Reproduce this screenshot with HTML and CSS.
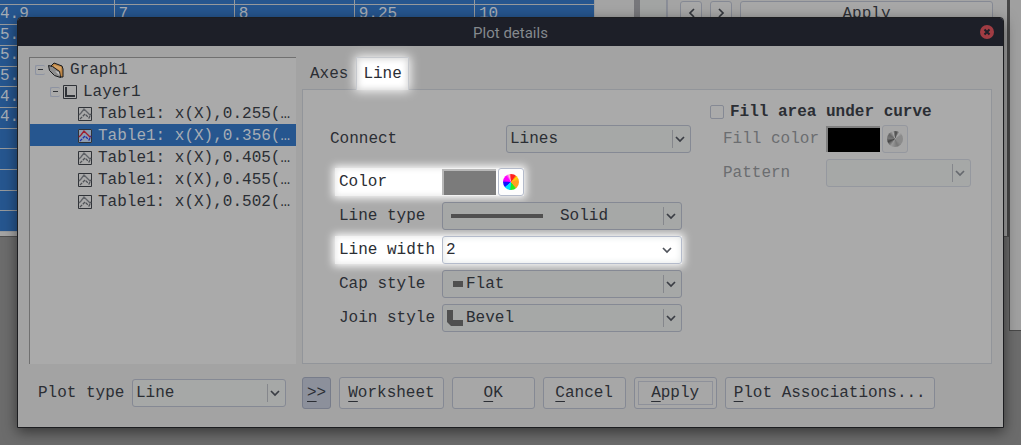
FILE: index.html
```
<!DOCTYPE html>
<html lang="en">
<head>
<meta charset="utf-8">
<title>Plot details</title>
<link rel="stylesheet" href="styles.css">
</head>
<body>
<svg class="defs" aria-hidden="true">
  <symbol id="chevron" viewBox="0 0 10 7"><path d="M1 1l4 4 4-4" fill="none" stroke="currentColor" stroke-width="1.700"/></symbol>
  <symbol id="curve" viewBox="0 0 14 14"><path d="M.5.5h13v13H.5z" fill="none" stroke="#303338"/><path class="c1" d="M1 8l2-2 3-4 4 4 2 2 1-1" fill="none" stroke-width="1.300"/><path class="c2" d="M2 12l5-5 4 4 2-4" fill="none" stroke-width="1.300" stroke-dasharray="3 1"/></symbol>
</svg>

<div class="desktop" aria-hidden="true">
  <div class="app">
    <table class="cells">
      <tr><td></td><td></td><td></td><td></td><td></td></tr>
      <tr><td>4.9</td><td>7</td><td>8</td><td>9.25</td><td>10</td></tr>
      <tr><td>5.</td><td></td><td></td><td></td><td></td></tr>
      <tr><td>5.</td><td></td><td></td><td></td><td></td></tr>
      <tr><td>5.</td><td></td><td></td><td></td><td></td></tr>
      <tr><td>4.</td><td></td><td></td><td></td><td></td></tr>
      <tr><td>4.</td><td></td><td></td><td></td><td></td></tr>
      <tr><td></td><td></td><td></td><td></td><td></td></tr>
      <tr><td></td><td></td><td></td><td></td><td></td></tr>
      <tr><td></td><td></td><td></td><td></td><td></td></tr>
      <tr><td></td><td></td><td></td><td></td><td></td></tr>
      <tr><td></td><td></td><td></td><td></td><td></td></tr>
    </table>
    <div class="scroll"></div>
    <div class="tools">
      <button class="btn step" tabindex="-1" aria-label="Previous"><svg viewBox="0 0 7 10"><path d="M6 1L2 5l4 4" fill="none" stroke="#33363c" stroke-width="1.700"/></svg></button>
      <button class="btn step" tabindex="-1" aria-label="Next"><svg viewBox="0 0 7 10"><path d="M1 1l4 4-4 4" fill="none" stroke="#33363c" stroke-width="1.700"/></svg></button>
      <button class="btn wide" tabindex="-1">Apply</button>
    </div>
  </div>
  <div class="side"></div>
</div>

<main class="dialog" role="dialog" aria-labelledby="title">
  <header class="titlebar">
    <h1 id="title">Plot details</h1>
    <button class="close" aria-label="Close"><svg viewBox="0 0 14 14"><circle cx="7" cy="7" r="7" fill="#a03c43"/><path d="M4.500 4.500l5 5m0-5l-5 5" stroke="#1d1f28" stroke-width="2"/></svg></button>
  </header>

  <div class="content">
    <ul class="tree">
      <li class="node graph"><button class="toggle" aria-label="Collapse Graph1"></button>
        <svg class="folder" viewBox="0 0 16 16"><path d="M3 4l3-3 8 3 1 3v8h-3z" fill="#bd8646" stroke="#17181b"/><path d="M6 3l7 2v4L6 5z" fill="#d4a265"/><path d="M.5 3.500l4 1 7 5 1 6-6-2-5-5z" fill="#8c8c8c" stroke="#17181b"/><path d="M7 9l4 1 1 4z" fill="#c0c0c0"/></svg>
        <span>Graph1</span></li>
      <li class="node layer"><button class="toggle" aria-label="Collapse Layer1"></button>
        <svg class="icon" viewBox="0 0 14 14"><path d="M.5.5h13v13H.5z" fill="none" stroke="#303338"/><path d="M3 2v9h9" fill="none" stroke="#303338" stroke-width="2"/></svg>
        <span>Layer1</span></li>
      <li class="node leaf"><svg class="icon"><use href="#curve"/></svg><span>Table1: x(X),0.255(…</span></li>
      <li class="node leaf selected"><svg class="icon"><use href="#curve"/></svg><span>Table1: x(X),0.356(…</span></li>
      <li class="node leaf"><svg class="icon"><use href="#curve"/></svg><span>Table1: x(X),0.405(…</span></li>
      <li class="node leaf"><svg class="icon"><use href="#curve"/></svg><span>Table1: x(X),0.455(…</span></li>
      <li class="node leaf"><svg class="icon"><use href="#curve"/></svg><span>Table1: x(X),0.502(…</span></li>
    </ul>

    <section class="pages">
      <div class="tabs" role="tablist">
        <button class="tab" role="tab" aria-selected="false">Axes</button>
        <button class="tab active" role="tab" aria-selected="true">Line</button>
      </div>
      <div class="panel" role="tabpanel">
        <div class="stroke">
          <div class="row connect"><label for="connect">Connect</label>
            <div class="combo"><select id="connect"><option>Lines</option></select><svg class="arrow"><use href="#chevron"/></svg></div></div>
          <div class="group">
            <div class="row color lit"><label for="color">Color</label>
              <button class="swatch" id="color" aria-label="Color"></button>
              <button class="btn pick" aria-label="Choose color"><span class="wheel"></span></button></div>
            <div class="row"><label for="type">Line type</label>
              <div class="combo solid"><select id="type"><option>Solid</option></select><span class="sample"></span><svg class="arrow"><use href="#chevron"/></svg></div></div>
            <div class="row lit"><label for="width">Line width</label>
              <div class="combo edit"><input id="width" type="text" value="2"><svg class="arrow"><use href="#chevron"/></svg></div></div>
            <div class="row"><label for="cap">Cap style</label>
              <div class="combo withicon"><select id="cap"><option>Flat</option></select><svg class="mark" viewBox="0 0 16 16"><path d="M6 5h10v6H6z" fill="#505050"/></svg><svg class="arrow"><use href="#chevron"/></svg></div></div>
            <div class="row"><label for="join">Join style</label>
              <div class="combo withicon"><select id="join"><option>Bevel</option></select><svg class="mark" viewBox="0 0 16 16"><path d="M0 0h6v10h10v6H4l-4-4z" fill="#505050"/></svg><svg class="arrow"><use href="#chevron"/></svg></div></div>
          </div>
        </div>
        <div class="fill">
          <label class="check"><input type="checkbox"><span>Fill area under curve</span></label>
          <div class="group off">
            <div class="row"><label for="fillcolor">Fill color</label>
              <button class="swatch black" id="fillcolor" disabled aria-label="Fill color"></button>
              <button class="btn pick" disabled aria-label="Choose fill color"><span class="wheel gray"></span></button></div>
            <div class="row"><label for="pattern">Pattern</label>
              <div class="combo"><select id="pattern" disabled><option></option></select><svg class="arrow"><use href="#chevron"/></svg></div></div>
          </div>
        </div>
      </div>
    </section>
  </div>

  <footer class="footer">
    <div class="plottype"><label for="plottype">Plot type</label>
      <div class="combo"><select id="plottype"><option>Line</option></select><svg class="arrow"><use href="#chevron"/></svg></div></div>
    <div class="actions">
      <button class="btn more"><u>&gt;</u>&gt;</button>
      <button class="btn long"><u>W</u>orksheet</button>
      <button class="btn"><u>O</u>K</button>
      <button class="btn"><u>C</u>ancel</button>
      <button class="btn default"><u>A</u>pply</button>
      <button class="btn long"><u>P</u>lot Associations...</button>
    </div>
  </footer>
</main>
</body>
</html>
```
FILE: styles.css
```
* { box-sizing: border-box; }
body {
  margin: 0;
  min-height: 100vh;
  padding: 17px;
  overflow: hidden;
  background: #6c6c6c;
  color: #2b2e34;
  font: 16px/20px "Liberation Mono", monospace;
}
button, input, select { font: inherit; color: inherit; margin: 0; }
.defs { position: absolute; width: 0; height: 0; }

/* windows behind the dialog */
.desktop { position: absolute; inset: 0; overflow: hidden; }
.app {
  position: absolute; top: 0; left: 0; right: 12px; height: 237px;
  display: flex;
  background: #a4a4a4;
  border-right: 2px solid #484848;
  border-bottom: 1px solid #505050;
}
.cells { width: 595px; height: 249px; border-collapse: collapse; table-layout: fixed; background: #26568f; color: #a6adb5; margin-top: -17px; }
.cells td { height: 20px; padding: 0 0 0 4px; border: 1px solid #96999c; white-space: nowrap; line-height: 19px; overflow: hidden; }
.cells td:first-child { border-left: 0; padding-left: 0; width: 114px; }
.scroll { width: 33px; margin-left: 39px; height: 232px; border-left: 6px solid #77777b; border-right: 1px solid #898d96; background: #a2a4a3; }
.tools { flex: 1; display: flex; gap: 8px; align-items: flex-start; padding: 1px 14px 0 12px; border-left: 1px solid #8b8e98; }
.tools .step { width: 22px; min-width: 22px; height: 24px; padding: 0; display: grid; place-items: center; }
.step svg { width: 7px; height: 10px; }
.tools .wide { flex: 1; height: 26px; }
.side { position: absolute; top: 0; right: 0; width: 12px; height: 331px; background: #a0a0a0; border-left: 1px solid #484848; border-bottom: 1px solid #484848; }

.dialog {
  position: relative;
  background: #a3a3a3;
  border: 1px solid #1c1d20;
  border-radius: 4px 4px 0 0;
  box-shadow: 0 4px 14px rgba(0, 0, 0, .5);
}
.titlebar {
  height: 28px;
  display: grid; grid-template-columns: 1fr auto 1fr; align-items: center;
  background: #1d1f28;
  border-radius: 3px 3px 0 0;
}
.titlebar h1 { grid-column: 2; margin: 0; padding-top: 2px; font: 15px/20px Roboto, sans-serif; color: #85898e; }
.close { justify-self: end; width: 14px; height: 14px; margin-right: 9px; padding: 0; border: 0; background: none; }
.close svg { display: block; width: 14px; height: 14px; }

.content { display: grid; grid-template-columns: 267px minmax(0, 1fr); gap: 6px; padding: 11px 11px 0; }

/* object tree */
.tree { margin: 0; padding: 0; list-style: none; background: #aaa; border: solid #707070; border-width: 1px 0 0 1px; }
.node { display: flex; align-items: center; height: 22px; padding-top: 1px; white-space: nowrap; }
.graph { padding-left: 5px; }
.layer { padding-left: 20px; }
.leaf { padding-left: 48px; }
.toggle { width: 10px; height: 10px; padding: 0; margin-right: 3px; background: linear-gradient(#303338, #303338) center / 5px 1px no-repeat; border: 1px solid #8d93a2; border-right: 0; border-radius: 2px; }
.folder { width: 16px; height: 16px; margin-right: 6px; }
.icon { width: 14px; height: 14px; margin-right: 6px; flex: none; }
.selected { background: #26568f; color: #a6adb5; }
.selected .icon { background: #8e9db1; --one: #a01e2e; --two: #2030a8; }
.c1 { stroke: var(--one, #606368); }
.c2 { stroke: var(--two, #505357); }

/* tabs */
.pages { display: flex; flex-direction: column; min-width: 0; }
.tabs { display: flex; height: 32px; }
.tab { padding: 2px 8px 0; border: 0; background: none; }
.tab.active {
  position: relative; z-index: 1;
  padding: 0 6px; margin-bottom: -1px;
  border: 1px solid #c6c9ce; border-bottom: 0;
  background: #fff;
  box-shadow: 0 0 10px 1px #fff, inset 0 0 6px 1px #d4d4d4;
}
.panel {
  flex: 1;
  display: grid; grid-template-columns: minmax(0, 361fr) minmax(0, 261fr); gap: 19px;
  padding: 0 20px 31px 27px;
  background: #aaa; border: 1px solid #92959a;
}
.stroke { padding-top: 35px; }
.group { display: flex; flex-direction: column; gap: 6px; padding: 0 9px; }
.row { display: flex; align-items: center; height: 28px; }
.row label { width: 103px; flex: none; white-space: nowrap; }
.connect { margin-bottom: 15px; }
.connect label { width: 176px; }
.lit { margin-left: -4px; padding-left: 4px; background: #fff; box-shadow: 0 0 8px 2px #fff, inset 0 0 6px #e0e0e0; }
.color { align-self: flex-start; }

.combo { position: relative; flex: 1; height: 28px; color: #2b2e34; }
.combo select, .combo input {
  appearance: none; width: 100%; height: 28px; padding: 0 24px 0 3px;
  background: #a6a8a7; border: 1px solid #858994; border-radius: 3px; outline: 0; opacity: 1;
}
.arrow { position: absolute; right: 6px; top: 11px; width: 10px; height: 7px; color: #3a3d44; pointer-events: none; }
.combo::after { content: ""; position: absolute; right: 18px; top: 5px; width: 1px; height: 18px; background: #85878c; pointer-events: none; }
.edit::after { display: none; }
.edit .arrow { right: 10px; color: #50545c; }
.combo.edit input { background: #fff; border-color: #b4bbcb; box-shadow: inset 0 0 7px #e0e4e4; }
.combo.solid select { padding-left: 117px; }
.combo.withicon select { padding-left: 23px; }
.sample { position: absolute; left: 9px; top: 12px; width: 92px; height: 4px; background: #505050; }
.mark { position: absolute; left: 5px; top: 6px; width: 16px; height: 16px; pointer-events: none; }

.swatch { width: 54px; height: 26px; padding: 0; border: solid #b8b8b8; border-width: 2px 0 0 2px; background: #7b7b7b; }
.swatch.black { background: #000; border-color: #808080; }
.btn { min-width: 83px; height: 32px; padding: 0 4px; background: #a7a7a7; border: 1px solid #858994; border-radius: 3px; white-space: nowrap; }
.btn.pick { display: grid; place-items: center; min-width: 26px; width: 26px; height: 28px; margin-left: 2px; padding: 0; }
.lit .pick { background: #fdfdfd; border-color: #b4bbcb; }
.wheel { width: 16px; height: 16px; border-radius: 50%; background: conic-gradient(#f22 0 30deg, #fd0 50deg, #ffa020 80deg 135deg, #2e2 150deg 180deg, #0df 190deg 225deg, #11f 235deg 265deg, #a0f 275deg, #f0f 290deg 320deg, #fbd 345deg, #f22 360deg); }
.gray { background: conic-gradient(#555 0 15deg, #aaa 35deg, #8b8b8b 60deg 130deg, #777 160deg, #999 210deg, #444 250deg, #777 275deg, #666 310deg, #aaa 345deg, #555 360deg); }

/* fill options */
.fill { padding-top: 12px; }
.check { display: flex; align-items: center; gap: 6px; height: 20px; margin-bottom: 3px; font-weight: bold; white-space: nowrap; }
.check input { appearance: none; flex: none; width: 14px; height: 14px; border: 1px solid #858994; border-radius: 2px; }
.off { padding: 0 0 0 13px; color: #6b6d70; }
.off .btn, .off select { border-color: #95989f; }
.off .arrow { color: #66696e; }

/* bottom bar */
.footer { display: grid; grid-template-columns: 267px minmax(0, 1fr); gap: 6px; align-items: center; padding: 13px 11px 18px; }
.plottype { display: flex; align-items: center; padding: 0 10px 0 9px; }
.plottype label { width: 94px; white-space: nowrap; }
.actions { display: flex; gap: 8px; }
.long { padding: 0 8px; }
.more { min-width: 28px; background: #8c909b; border-color: #777c8a; }
.default { outline: 1px solid #8e919a; outline-offset: -5px; }
.btn u { text-underline-offset: 4px; text-decoration-thickness: 1px; }
```
